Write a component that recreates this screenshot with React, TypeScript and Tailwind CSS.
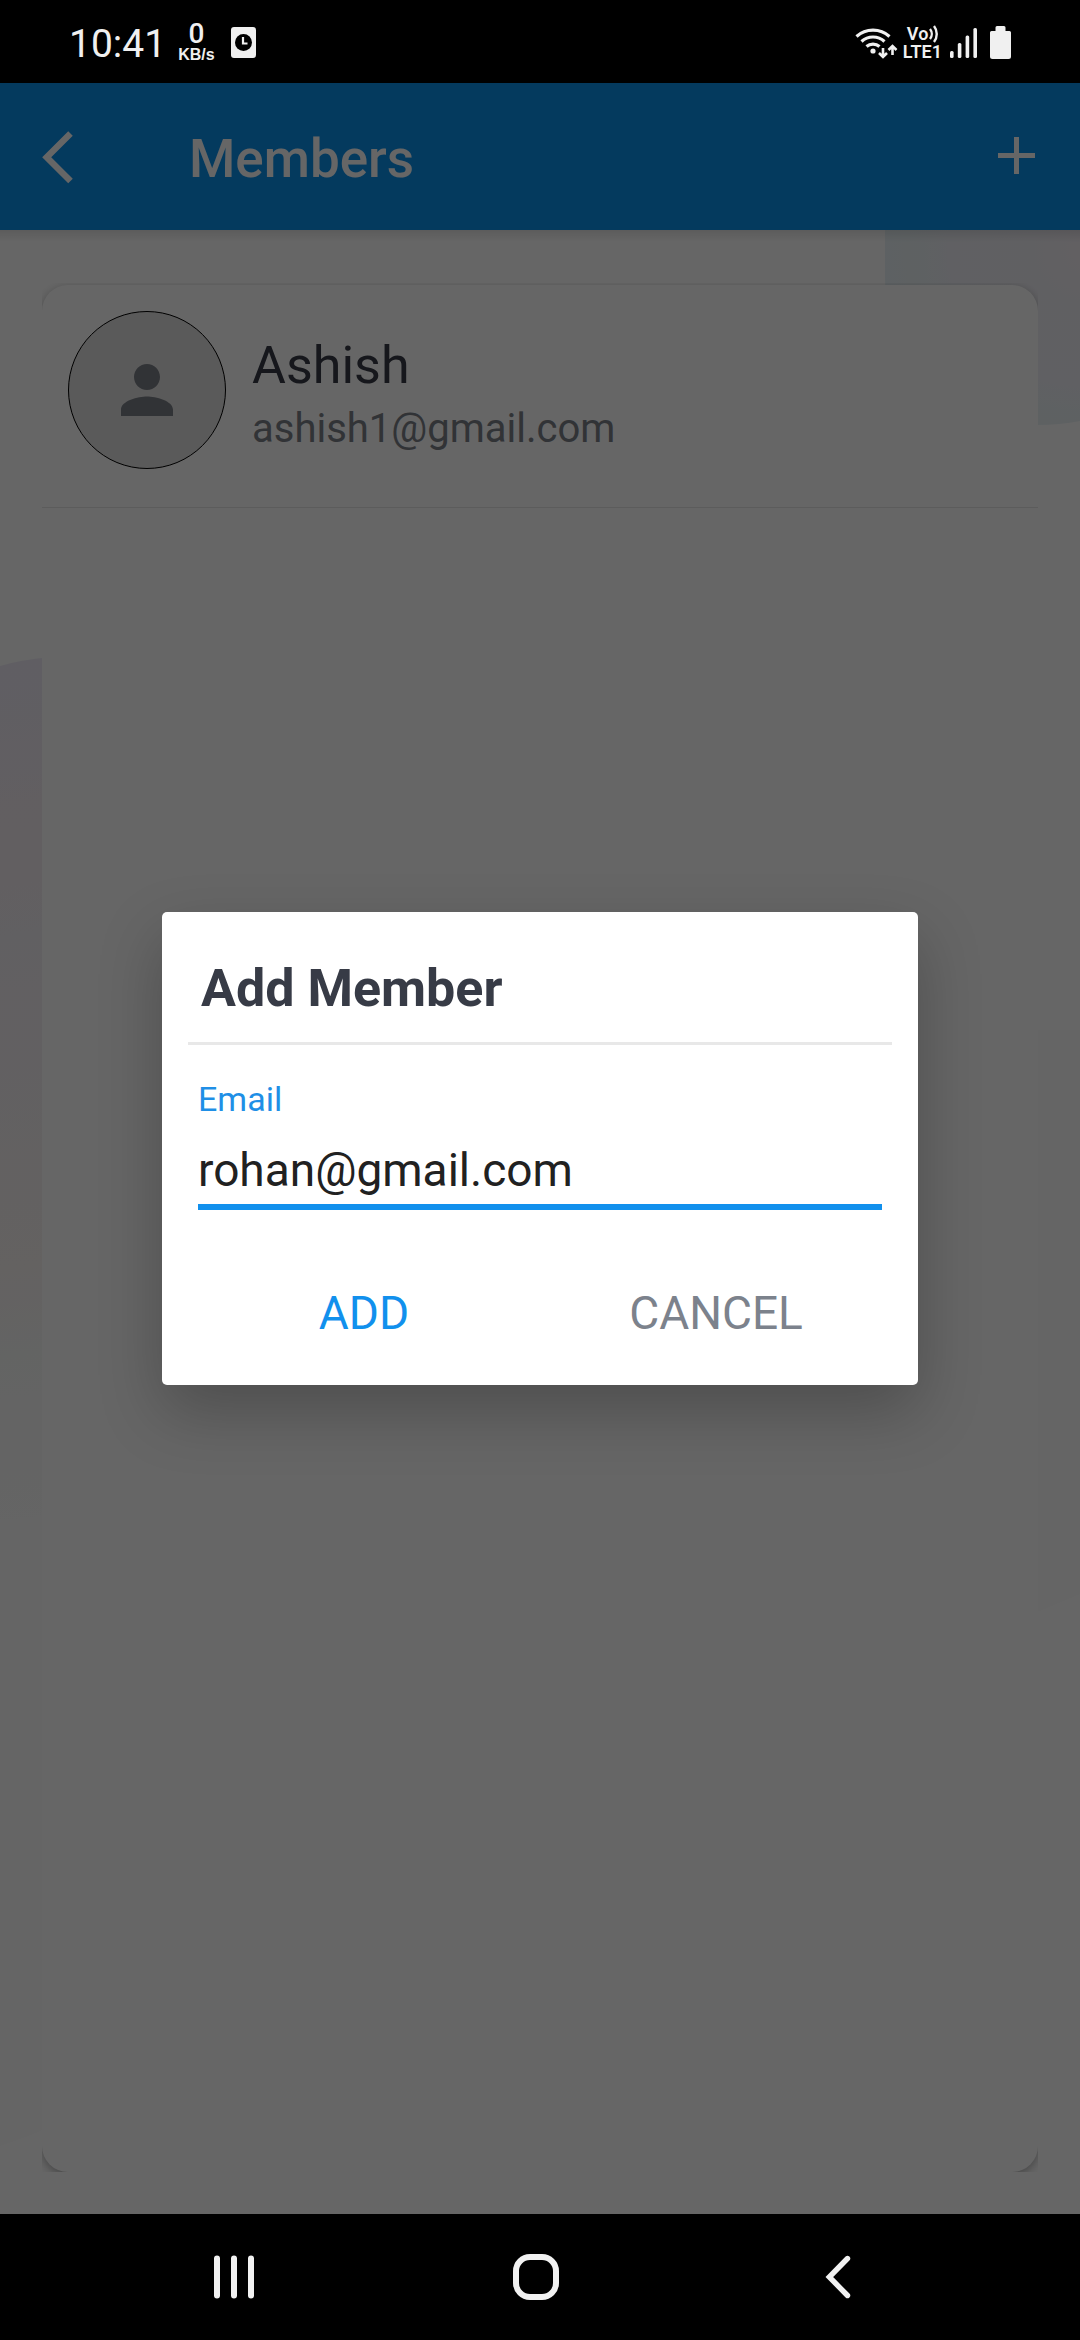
import { useState } from "react";
import { MdPerson } from "react-icons/md";

function WifiIcon() {
  return (
    <svg width="44" height="34" viewBox="0 0 44 34" fill="none" stroke="currentColor" strokeWidth="3.2" aria-hidden="true">
      <path d="M1.5 10.5a24.5 24.5 0 0 1 33 0" />
      <path d="M6.5 15.5a17 17 0 0 1 23 0" />
      <path d="M11.5 20.5a10 10 0 0 1 13 0" />
      <circle cx="18" cy="25" r="2.6" fill="currentColor" stroke="none" />
      <path d="M28 22v9M24 27l4 4 4-4M37.500 29v-9M33.500 24l4-4 4 4" strokeWidth="2.600" />
    </svg>
  );
}

function StatusBar() {
  return (
    <div className="flex h-[83px] shrink-0 items-center justify-between bg-black pl-[69px] pr-[69px] pt-[2px] text-[#f0f0f0]">
      <div className="flex items-center">
        <span className="pt-[2px] text-[39px] leading-[48px]">10:41</span>
        <span className="ml-3 flex flex-col items-center">
          <span className="text-[28px] font-medium leading-[24px]">0</span>
          <span className="font-['Liberation_Sans',sans-serif] text-[16px] font-bold leading-[18px]">KB/s</span>
        </span>
        <svg className="ml-4" width="25" height="31" viewBox="0 0 25 31" aria-hidden="true">
          <rect width="25" height="31" rx="3" fill="#f0f0f0" />
          <circle cx="12.500" cy="15.500" r="8.500" fill="#000" />
          <path d="M12 10v6.500h4.500" fill="none" stroke="#f0f0f0" strokeWidth="2.200" />
        </svg>
      </div>
      <div className="flex items-center">
        <WifiIcon />
        <span className="ml-1 flex flex-col text-[18px] font-semibold leading-[18px]">
          <span className="flex items-center pl-1">
            Vo
            <svg width="12" height="18" viewBox="0 0 12 18" fill="none" stroke="currentColor" strokeWidth="2.400" aria-hidden="true">
              <path d="M2 4a8 8 0 0 1 0 10M6 1a13 13 0 0 1 0 16" />
            </svg>
          </span>
          <span>LTE1</span>
        </span>
        <svg className="ml-2" width="28" height="32" viewBox="0 0 28 32" fill="currentColor" aria-hidden="true">
          <rect x="0" y="24" width="3.600" height="7" rx="1.500" />
          <rect x="7.800" y="16" width="3.600" height="15" rx="1.500" />
          <rect x="15.600" y="8.500" width="3.600" height="22.500" rx="1.500" />
          <rect x="23.400" y="1" width="3.600" height="30" rx="1.500" />
        </svg>
        <svg className="ml-3" width="21" height="33" viewBox="0 0 21 33" fill="currentColor" aria-hidden="true">
          <path d="M7 0h7q1.500 0 1.500 1.500V5h4Q21 5 21 6.500v24q0 2.500-2.500 2.500h-16Q0 33 0 30.500v-24Q0 5 1.500 5h4V1.500Q5.500 0 7 0Z" />
        </svg>
      </div>
    </div>
  );
}

function Backdrop() {
  return (
    <svg className="absolute inset-0 h-full w-full" viewBox="0 0 1080 1984" preserveAspectRatio="none" aria-hidden="true">
      <defs>
        <radialGradient id="corner" gradientUnits="userSpaceOnUse" cx="1085" cy="20" r="210">
          <stop offset="0" stopColor="#f5eff5" />
          <stop offset="0.25" stopColor="#f1f0f6" />
          <stop offset="0.65" stopColor="#eff1f7" />
          <stop offset="0.85" stopColor="#eaf3f6" />
          <stop offset="1" stopColor="#e9f3f8" />
        </radialGradient>
        <linearGradient id="side" gradientUnits="userSpaceOnUse" x1="30" y1="425" x2="130" y2="1285">
          <stop offset="0" stopColor="#efecf8" />
          <stop offset="0.2" stopColor="#f5edf2" />
          <stop offset="0.32" stopColor="#f3eff4" />
          <stop offset="0.7" stopColor="#f9f4f3" />
          <stop offset="0.8" stopColor="#f8f9f8" />
          <stop offset="1" stopColor="#fcfcfc" />
        </linearGradient>
      </defs>
      <path d="M885 0H1080V191Q1060 195 1036 195Q887 195 885 50Z" fill="url(#corner)" />
      <path d="M0 800H50V1897Q25 1908 0 1916Z" fill="#fcfcfc" />
      <path d="M0 436Q20 430 50 427V1284Q20 1290 0 1290Z" fill="url(#side)" />
      <path d="M1030 800H1080V1364L1030 1385Z" fill="#fcfcfc" />
    </svg>
  );
}

function AppBar() {
  return (
    <header className="relative flex h-[147px] shrink-0 items-center bg-[#0c91ec] pl-[36px] pr-[36px] text-white">
      <button type="button" aria-label="Back" className="flex">
        <svg width="44" height="60" viewBox="0 0 44 60" fill="none" stroke="currentColor" strokeWidth="6.400" aria-hidden="true">
          <path d="M34.500 6.500 10.700 30.300 34.500 54.100" />
        </svg>
      </button>
      <h1 className="ml-[109px] flex-1 pt-1 text-[53px] font-medium leading-[64px]">Members</h1>
      <button type="button" aria-label="Add member" className="flex">
        <svg width="55" height="55" viewBox="0 0 55 55" fill="none" stroke="currentColor" strokeWidth="5" aria-hidden="true">
          <path d="M27.500 8v37M9 26.500h37" />
        </svg>
      </button>
    </header>
  );
}

function MemberRow({ name, email }: { name: string; email: string }) {
  return (
    <li className="flex items-start gap-[26px] border-b border-[#e6e6e6] pb-[38px] pl-[26px] pr-[26px] pt-[26px]">
      <span className="flex size-[158px] shrink-0 items-center justify-center rounded-full border border-black bg-[#e1e1e1] text-[#7c8088]">
        <MdPerson className="size-[78px]" aria-hidden="true" />
      </span>
      <span className="flex min-w-0 flex-col pt-[22px]">
        <span className="text-[52px] leading-[66px] text-[#373b46]">{name}</span>
        <span className="text-[40px] leading-[60px] text-[#7c8088]">{email}</span>
      </span>
    </li>
  );
}

function AddMemberDialog() {
  const [email, setEmail] = useState("rohan@gmail.com");
  return (
    <form
      role="dialog"
      aria-labelledby="dialog-title"
      onSubmit={(e) => e.preventDefault()}
      className="w-[70%] rounded-[5px] bg-white px-[26px] pb-[22px] shadow-[0_26px_64px_rgba(0,0,0,0.24)]"
    >
      <h2 id="dialog-title" className="border-b-[3px] border-[#e8e8e8] pb-[23px] pl-[13px] pt-[47px] text-[52px] font-bold leading-[60px] text-[#373b46]">
        Add Member
      </h2>
      <div className="flex flex-col px-[10px] pt-[34px]">
        <label htmlFor="email" className="text-[34px] leading-[40px] text-[#1f8fe6]">
          Email
        </label>
        <input
          id="email"
          type="email"
          value={email}
          onChange={(e) => setEmail(e.target.value)}
          className="mt-[22px] h-[69px] w-full border-b-[6px] border-[#1190ed] bg-transparent pb-[6px] text-[46px] leading-[57px] text-[#212121] outline-none"
        />
      </div>
      <div className="mt-[53px] grid grid-cols-2">
        <button type="submit" className="h-[100px] text-[46px] text-[#1190ed]">
          ADD
        </button>
        <button type="button" className="h-[100px] text-[46px] text-[#7c828c]">
          CANCEL
        </button>
      </div>
    </form>
  );
}

function NavigationBar() {
  return (
    <nav className="grid h-[126px] shrink-0 grid-cols-3 items-center justify-items-center bg-black pl-[83px] pr-[91px] text-[#f2f2f2]">
      <button type="button" aria-label="Recent apps">
        <svg width="42" height="44" viewBox="0 0 42 44" stroke="currentColor" strokeWidth="6" strokeLinecap="round" aria-hidden="true">
          <path d="M4 3.500v37M21 3.500v37M38 3.500v37" />
        </svg>
      </button>
      <button type="button" aria-label="Home">
        <svg width="46" height="46" viewBox="0 0 46 46" fill="none" stroke="currentColor" strokeWidth="6" aria-hidden="true">
          <rect x="3" y="3" width="40" height="40" rx="14" />
        </svg>
      </button>
      <button type="button" aria-label="Back">
        <svg width="26" height="44" viewBox="0 0 26 44" fill="none" stroke="currentColor" strokeWidth="5.400" strokeLinecap="round" aria-hidden="true">
          <path d="M22.500 3.500 4.300 22 22.500 40.500" />
        </svg>
      </button>
    </nav>
  );
}

export default function App() {
  return (
    <div className="flex min-h-screen flex-col font-[Roboto,sans-serif]">
      <StatusBar />
      <div className="relative flex flex-1 flex-col bg-white">
        <AppBar />
        <main className="relative flex flex-1 flex-col px-[42px] pb-[42px] pt-[53px]">
          <Backdrop />
          <div className="absolute inset-x-0 top-0 h-3 bg-linear-to-b from-black/10 to-transparent" />
          <div className="relative flex flex-1 flex-col overflow-hidden pt-[2px]">
            <ul className="flex-1 rounded-[26px] bg-white shadow-[0_3px_10px_rgba(0,0,0,0.32)]">
              <MemberRow name="Ashish" email="ashish1@gmail.com" />
            </ul>
          </div>
        </main>
        <div className="absolute inset-0 flex items-center justify-center bg-black/60">
          <AddMemberDialog />
        </div>
      </div>
      <NavigationBar />
    </div>
  );
}
